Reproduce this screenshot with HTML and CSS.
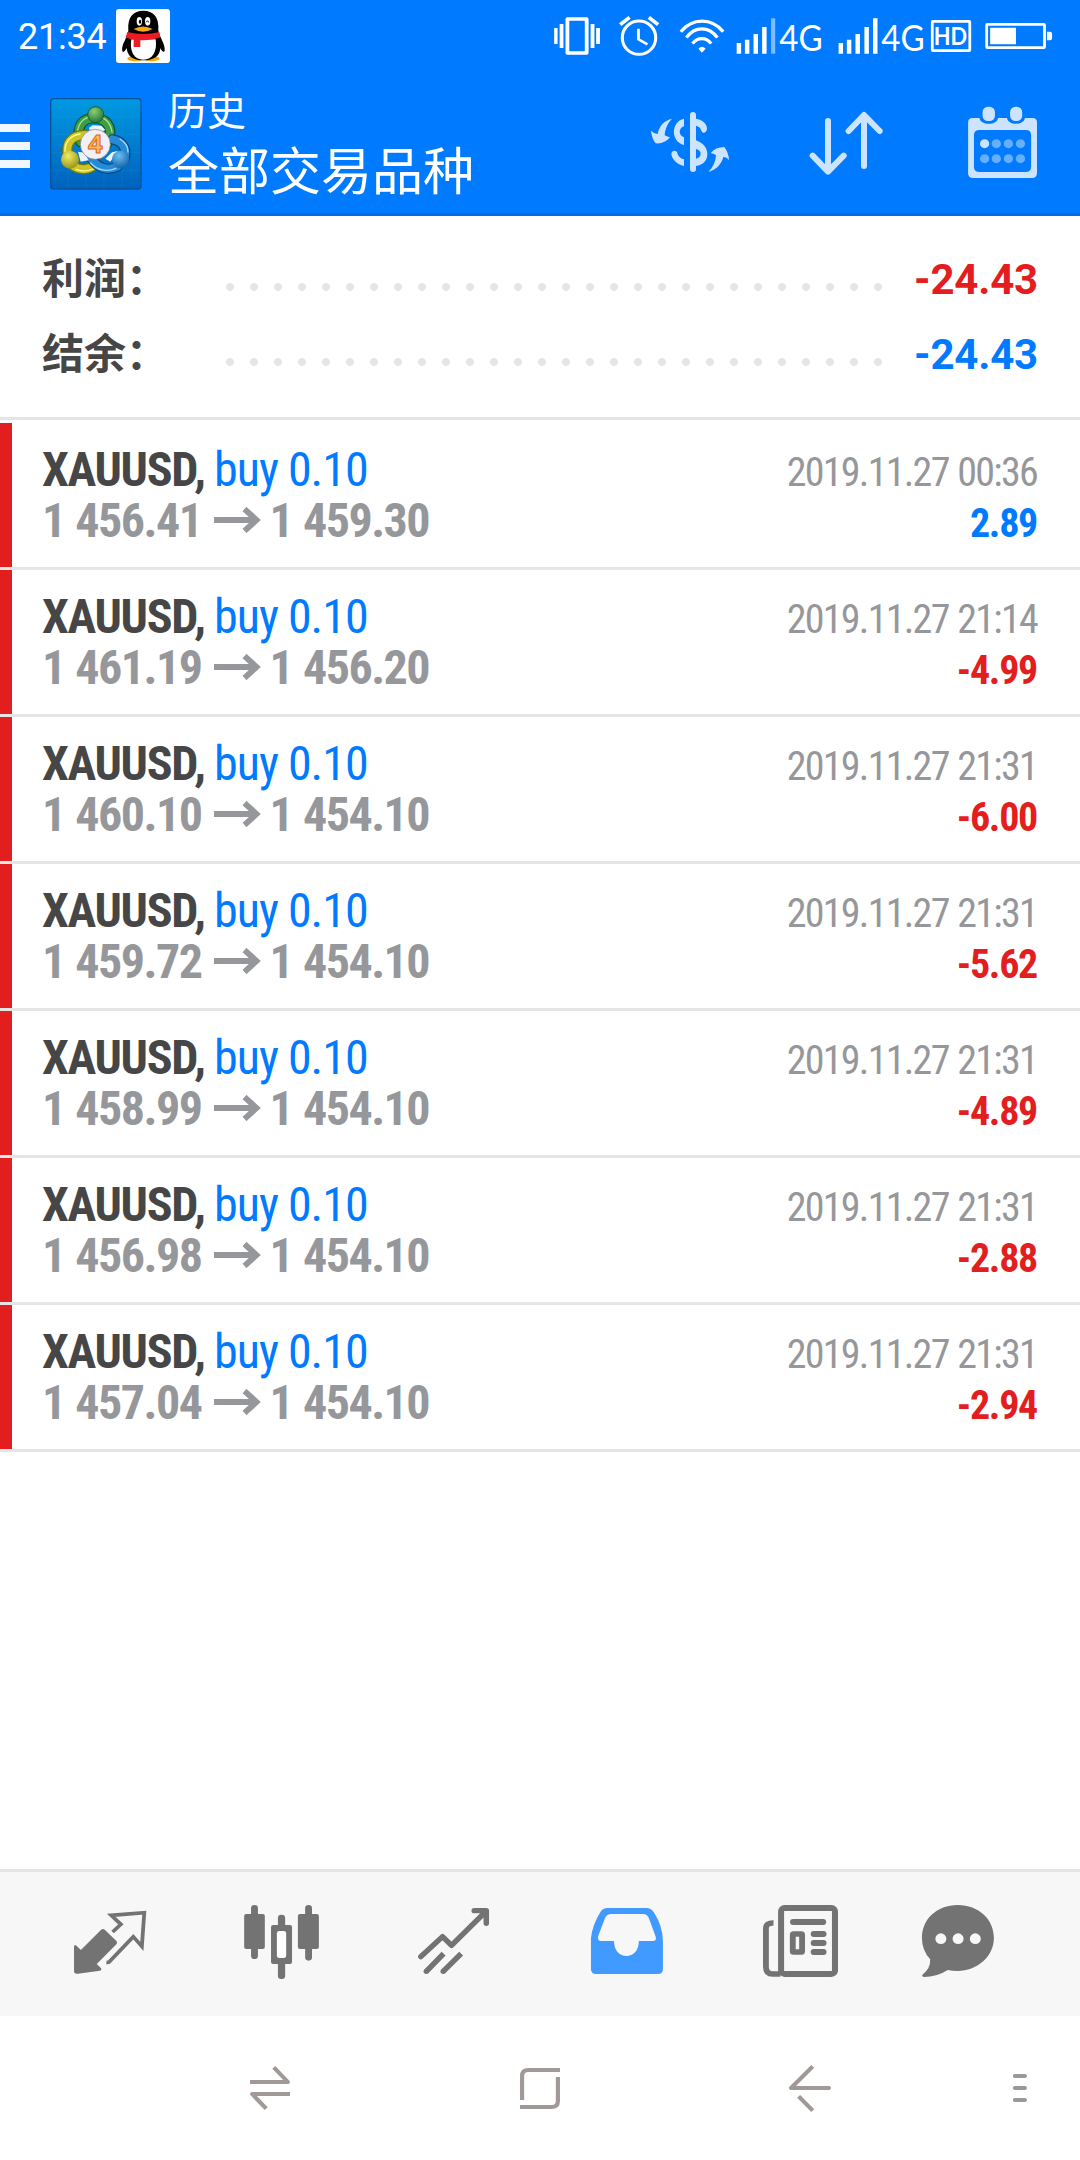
FILE: index.html
```html
<!DOCTYPE html>
<html lang="zh-CN">
<head>
<meta charset="utf-8">
<title>历史</title>
<link rel="stylesheet" href="styles.css">
</head>
<body>
<svg class="defs" width="0" height="0" aria-hidden="true">
  <defs>
    <linearGradient id="tile" x1="0" y1="0" x2="0" y2="1"><stop offset="0" stop-color="#0099e2"/><stop offset="1" stop-color="#0062bd"/></linearGradient>
    <radialGradient id="green" cx=".4" cy=".3" r=".8"><stop offset="0" stop-color="#8ccf7c"/><stop offset="1" stop-color="#176b2c"/></radialGradient>
    <radialGradient id="yellow" cx=".4" cy=".3" r=".8"><stop offset="0" stop-color="#f1ec66"/><stop offset="1" stop-color="#8f8a0c"/></radialGradient>
    <radialGradient id="azure" cx=".4" cy=".3" r=".8"><stop offset="0" stop-color="#6cc0f0"/><stop offset="1" stop-color="#0b5aa6"/></radialGradient>
    <symbol id="arrow" viewBox="0 0 47 26"><path d="M0 13H42M30.500 2L42.500 13L30.500 24" fill="none" stroke="#96979b" stroke-width="5.8"/></symbol>
  </defs>
</svg>
<header class="header">
  <div class="status">
    <span class="time">21:34</span>
    <svg class="qq" viewBox="348 27 162 162">
      <rect x="348" y="27" width="162" height="162" rx="9" fill="#fff"/>
      <ellipse cx="405" cy="176" rx="23" ry="8" fill="#f9a90c"/><ellipse cx="455" cy="176" rx="23" ry="8" fill="#f9a90c"/>
      <path d="M385 92C382 50 400 32 430 32S478 50 475 92L480 108C487 122 496 140 494 152C492 160 484 152 481 144C480 168 462 181 430 181S382 168 380 144C376 152 369 160 367 153C364 140 374 122 381 108Z" fill="#000"/>
      <path d="M394 118H467C472 155 458 179 430 179S388 155 394 118Z" fill="#fff"/>
      <path d="M382 96Q430 108 478 96L481 112Q455 122 421 121V141H401V119Q388 117 377 112Z" fill="#ec1c24"/>
      <ellipse cx="418" cy="64" rx="8" ry="13" fill="#fff"/><ellipse cx="443" cy="64" rx="8" ry="13" fill="#fff"/>
      <ellipse cx="420" cy="65" rx="3.5" ry="6" fill="#000"/><path d="M438 67Q442 58 447 67" fill="none" stroke="#000" stroke-width="3"/>
      <path d="M401 87Q429 72 458 87Q429 103 401 87Z" fill="#f9a90c"/>
    </svg>
    <div class="tray">
      <svg class="vibrate" viewBox="29 36 156.8 150" preserveAspectRatio="none" fill="#fff"><path d="M41 84h10v48H41zM57 72h11v72H57zM147 72h11v72h-11zM163 84h11v48h-11z"/><rect x="79.500" y="57" width="56" height="102" fill="none" stroke="#fff" stroke-width="11" stroke-linejoin="round"/></svg>
      <svg class="alarm" viewBox="223.6 36 127.8 150" preserveAspectRatio="none" fill="none" stroke="#fff" stroke-width="9"><ellipse cx="287.500" cy="113" rx="48.500" ry="50"/><path d="M286 86V118L312 133" stroke-width="8"/><path d="M233 74L260 52M316 52L343 74" stroke-width="11"/></svg>
      <svg class="wifi" viewBox="397.8 36 145.200 150" preserveAspectRatio="none" fill="none" stroke="#fff" stroke-width="9.500"><path d="M409 95C443 53 498 53 532 95M425 113C450 78 490 78 515 113M443 131C457 111 483 111 497 131"/><path d="M460 146Q470 134 481 146L470 158Z" fill="#fff" stroke="none"/></svg>
      <svg class="signal" viewBox="557.5 36 273 150" preserveAspectRatio="none" fill="#fff"><path d="M571 129h13v32h-13zM595 119h13v42h-13zM620 102h13v59h-13zM645 81h13v80h-13z"/><path d="M671 55h12v106h-12z" opacity=".5"/><text x="695" y="154" font-size="112" textLength="126" lengthAdjust="spacingAndGlyphs">4G</text></svg>
      <svg class="signal" viewBox="853.7 36 273 150" preserveAspectRatio="none" fill="#fff"><path d="M867 129h13v32h-13zM891 119h13v42h-13zM916 102h13v59h-13zM942 81h13v80h-13zM967 55h13v106h-13z"/><text x="991" y="154" font-size="112" textLength="126" lengthAdjust="spacingAndGlyphs">4G</text></svg>
      <svg class="hd" viewBox="1126.6 36 133.6 150" preserveAspectRatio="none" fill="#fff"><rect x="1139" y="64" width="109" height="88" rx="2" fill="none" stroke="#fff" stroke-width="8"/><text x="1143" y="135" font-size="74" font-weight="700" textLength="97" lengthAdjust="spacingAndGlyphs">HD</text></svg>
      <svg class="battery" viewBox="1283.4 36 209.1 150" preserveAspectRatio="none" fill="#fff"><rect x="1297" y="73" width="168" height="70" rx="2" fill="none" stroke="#fff" stroke-width="8"/><path d="M1307 83h75v50h-75zM1472 95h9q6 0 6 6v14q0 6-6 6h-9z"/></svg>
    </div>
  </div>
  <div class="toolbar">
    <div class="menu"><i></i><i></i><i></i></div>
    <svg class="logo" viewBox="30 26 276 276">
      <rect x="32" y="28" width="271" height="271" rx="10" fill="url(#tile)" stroke="#08529c" stroke-width="4"/>
      <path d="M84 30V298M138 30V298M192 30V298M246 30V298M34 82H302M34 136H302M34 190H302M34 244H302" stroke="#4db8ff" opacity=".14" stroke-width="2"/>
      <g fill="none" stroke-linecap="round">
        <path d="M122 158C106 108 128 86 166 86C210 90 222 128 198 168" stroke="#0d5522" stroke-width="32"/><path d="M122 158C106 108 128 86 166 86C210 90 222 128 198 168" stroke="#3f9d43" stroke-width="25"/><path d="M112 130C115 96 138 80 166 80C195 83 212 100 216 128" stroke="#a8dda0" stroke-width="4"/>
        <path d="M136 137C90 138 76 162 84 204M100 230C128 248 154 238 168 222" stroke="#767309" stroke-width="31"/><path d="M136 137C90 138 76 162 84 204M100 230C128 248 154 238 168 222" stroke="#cbc528" stroke-width="24"/><path d="M75 186C74 158 92 138 120 134M108 240Q134 250 158 239" stroke="#fff997" stroke-width="4"/>
        <path d="M218 150C250 156 262 180 253 212M232 232C202 246 172 236 154 207" stroke="#0a4684" stroke-width="31"/><path d="M218 150C250 156 262 180 253 212M232 232C202 246 172 236 154 207" stroke="#268bd4" stroke-width="24"/><path d="M240 149C257 160 265 176 264 188M152 221C172 244 202 248 228 237" stroke="#9bdcff" stroke-width="4"/>
      </g>
      <path d="M146 116L158 108L184 109L196 122L180 128H154ZM114 187L133 190L146 213L122 217ZM216 189L233 185L211 217L196 208Z" fill="#e9f5f6"/>
      <circle cx="167" cy="76" r="24" fill="url(#green)" stroke="#12622b" stroke-width="3"/><circle cx="90" cy="211" r="27" fill="url(#yellow)"/><circle cx="242" cy="210" r="26" fill="url(#azure)"/>
      <circle cx="166" cy="165" r="45" fill="#f1f1f5" stroke="#857775" stroke-width="2"/>
      <text x="144" y="191" font-size="75" font-weight="700" fill="#f9bd55" stroke="#dd6420" stroke-width="3" textLength="44" lengthAdjust="spacingAndGlyphs">4</text>
    </svg>
    <div class="titles"><div class="title">历史</div><div class="subtitle">全部交易品种</div></div>
    <div class="actions">
      <svg class="action" viewBox="45 45 270 240" fill="#cce4ff">
        <rect x="180" y="66" width="18" height="180" rx="9"/>
        <path d="M198 86C216 88 232 101 231 117C229 130 216 133 213 119Q210 110 198 107ZM162 86V109C145 114 145 136 162 142V165C122 155 122 95 162 86ZM198 151C221 160 232 174 232 192C232 211 220 225 198 228V206C216 204 217 180 198 177ZM142 189C144 199 151 205 162 208V228C141 223 127 210 124 193C124 180 139 179 142 189Z"/>
        <path d="M126 86C104 91 88 106 83 132Q70 130 63 122Q65 145 77 160Q103 163 120 142Q113 141 104 136C105 117 113 99 126 86ZM235 246C258 240 275 222 280 201Q290 201 297 211Q296 188 283 171Q256 171 242 190Q251 190 258 196C257 215 249 232 235 246Z"/>
      </svg>
      <svg class="action sort" viewBox="510 45 270 240" fill="none" stroke="#cce4ff" stroke-width="18" stroke-linecap="round" stroke-linejoin="round"><path d="M594 93V242M548 197L594 245L641 197M702 228V78M656 123L702 75L749 123"/></svg>
      <svg class="action" viewBox="1219.5 315 261.3 240" preserveAspectRatio="none" fill="#cce4ff">
        <path fill-rule="evenodd" d="M1256 354H1276C1278 377 1328 377 1330 354H1356C1358 377 1406 377 1408 354H1431Q1443 354 1443 368V520Q1443 534 1429 534H1257Q1243 534 1243 520V368Q1243 354 1256 354ZM1276 390Q1260 390 1260 406V500Q1260 516 1276 516H1410Q1426 516 1426 500V406Q1426 390 1410 390Z"/>
        <rect x="1285" y="320" width="36" height="43" rx="16"/><rect x="1365" y="320" width="35" height="43" rx="16"/>
        <circle cx="1291" cy="431" r="13.500"/><g opacity=".5"><circle cx="1325" cy="431" r="13.500"/><circle cx="1360" cy="431" r="13.500"/><circle cx="1395" cy="431" r="13.500"/><circle cx="1291" cy="476" r="13.500"/><circle cx="1325" cy="476" r="13.500"/><circle cx="1360" cy="476" r="13.500"/><circle cx="1395" cy="476" r="13.500"/></g>
      </svg>
    </div>
  </div>
</header>
<main class="content">
  <section class="summary">
    <div class="total"><span class="label">利润：</span><span class="dots"></span><span class="sum loss">-24.43</span></div>
    <div class="total"><span class="label">结余：</span><span class="dots"></span><span class="sum gain">-24.43</span></div>
  </section>
  <section class="deals">
    <article class="deal"><div class="line"><span class="symbol">XAUUSD,</span><span class="side">buy 0.10</span><span class="date">2019.11.27 00:36</span></div><div class="line"><span class="price">1 456.41</span><svg class="arrow"><use href="#arrow"/></svg><span class="price">1 459.30</span><span class="amount gain">2.89</span></div></article>
    <article class="deal"><div class="line"><span class="symbol">XAUUSD,</span><span class="side">buy 0.10</span><span class="date">2019.11.27 21:14</span></div><div class="line"><span class="price">1 461.19</span><svg class="arrow"><use href="#arrow"/></svg><span class="price">1 456.20</span><span class="amount loss">-4.99</span></div></article>
    <article class="deal"><div class="line"><span class="symbol">XAUUSD,</span><span class="side">buy 0.10</span><span class="date">2019.11.27 21:31</span></div><div class="line"><span class="price">1 460.10</span><svg class="arrow"><use href="#arrow"/></svg><span class="price">1 454.10</span><span class="amount loss">-6.00</span></div></article>
    <article class="deal"><div class="line"><span class="symbol">XAUUSD,</span><span class="side">buy 0.10</span><span class="date">2019.11.27 21:31</span></div><div class="line"><span class="price">1 459.72</span><svg class="arrow"><use href="#arrow"/></svg><span class="price">1 454.10</span><span class="amount loss">-5.62</span></div></article>
    <article class="deal"><div class="line"><span class="symbol">XAUUSD,</span><span class="side">buy 0.10</span><span class="date">2019.11.27 21:31</span></div><div class="line"><span class="price">1 458.99</span><svg class="arrow"><use href="#arrow"/></svg><span class="price">1 454.10</span><span class="amount loss">-4.89</span></div></article>
    <article class="deal"><div class="line"><span class="symbol">XAUUSD,</span><span class="side">buy 0.10</span><span class="date">2019.11.27 21:31</span></div><div class="line"><span class="price">1 456.98</span><svg class="arrow"><use href="#arrow"/></svg><span class="price">1 454.10</span><span class="amount loss">-2.88</span></div></article>
    <article class="deal"><div class="line"><span class="symbol">XAUUSD,</span><span class="side">buy 0.10</span><span class="date">2019.11.27 21:31</span></div><div class="line"><span class="price">1 457.04</span><svg class="arrow"><use href="#arrow"/></svg><span class="price">1 454.10</span><span class="amount loss">-2.94</span></div></article>
  </section>
</main>
<nav class="tabs">
  <svg class="tab quotes" viewBox="203.3 156 232.3 240" preserveAspectRatio="none"><path d="M215 290Q215 282 222 287L235 300L293 240Q299 234 305 240L338 273Q342 278 338 283L281 342L293 354Q297 360 290 362L226 371Q215 373 215 363Z" fill="#737373"/><path d="M327 246L351 223L323 196L419 188L412 289L387 260L319 334Q315 338 309 337" fill="none" stroke="#737373" stroke-width="11"/></svg>
  <svg class="tab charts" viewBox="699.8 156 232.3 240" preserveAspectRatio="none" fill="#737373"><rect x="709" y="192" width="60" height="105" rx="6"/><rect x="729" y="165" width="20" height="162" rx="10"/><rect x="865" y="192" width="61" height="105" rx="6"/><rect x="886" y="165" width="20" height="167" rx="10"/><rect x="807" y="194" width="21" height="60" rx="10"/><rect x="807" y="320" width="21" height="67" rx="9"/><rect x="787" y="225" width="61" height="117" rx="6"/><rect x="804" y="243" width="27" height="81" rx="7" fill="#fff"/></svg>
  <svg class="tab trade" viewBox="1199.2 156 232.3 240" preserveAspectRatio="none" fill="none" stroke="#737373" stroke-width="16" stroke-linejoin="round"><path d="M1222 320L1285 260L1311 286L1408 187M1377 182H1412V220" stroke-linecap="round"/><path d="M1238 364L1288 311M1287 364L1339 311"/><g fill="#737373" stroke="none"><circle cx="1238" cy="364" r="8"/><circle cx="1287" cy="364" r="8"/></g></svg>
  <svg class="tab history" viewBox="136.5 156 232.3 240" preserveAspectRatio="none"><path fill="#409aff" fill-rule="evenodd" d="M196 174H309Q322 174 330 186Q357 228 357 275V357Q357 372 342 372H163Q148 372 148 357V265Q152 224 176 185Q183 174 196 174ZM207 192Q194 192 189 204L169 258Q166 273 178 273H215C214 333 288 333 287 273H328Q339 273 336 260L316 204Q312 192 298 192Z"/></svg>
  <svg class="tab news" viewBox="641.7 156 232.3 240" preserveAspectRatio="none" fill="none" stroke="#737373"><rect x="700" y="174" width="156.500" height="198" rx="10" stroke-width="17.500"/><path d="M678 219Q656 218 656 236V350Q656 372 676 372H698" stroke-width="17"/><path d="M735 216H822M795 252H823M795 279H823M795 306H823" stroke-width="18" stroke-linecap="round"/><rect x="734" y="252" width="27" height="54" rx="2" stroke-width="17"/></svg>
  <svg class="tab chat" viewBox="1097.6 156 232.3 240" preserveAspectRatio="none"><path d="M1213 165C1274 165 1318 208 1318 264S1268 363 1213 363Q1197 363 1184 360Q1152 381 1115 381Q1106 379 1112 373Q1134 355 1133 328Q1109 301 1109 264C1109 208 1152 165 1213 165Z" fill="#737373"/><g fill="#f7f7f7"><circle cx="1164" cy="266" r="16"/><circle cx="1214" cy="266" r="16"/><circle cx="1264" cy="266" r="16"/></g></svg>
</nav>
<footer class="sysnav">
  <svg class="key recent" viewBox="696.9 624 174.2 180" preserveAspectRatio="none"><path d="M726 696H836L795 652M842 732H732L773 776"/></svg>
  <svg class="key home" viewBox="1480.9 624 174.2 180" preserveAspectRatio="none"><path d="M1516 750V678Q1516 660 1534 660H1626M1620 681V753Q1620 771 1602 771H1510"/></svg>
  <svg class="key back" viewBox="696.9 624 174.2 180" preserveAspectRatio="none"><path d="M792 649L729 714H839M751 739L792 782"/><circle cx="839" cy="714" r="6" class="cap"/></svg>
  <svg class="key more" viewBox="1306.7 624 174.2 180" preserveAspectRatio="none"><path d="M1379 678H1408M1379 714H1408M1379 750H1408"/></svg>
</footer>
</body>
</html>
```
FILE: styles.css
```css
* { box-sizing: border-box; }
body { margin: 0; width: 1080px; height: 2160px; display: flex; flex-direction: column; background: #fff; font-family: Roboto, "Noto Sans CJK SC", sans-serif; overflow: hidden; }
svg { display: block; flex: none; }
.defs { position: absolute; }

.header { height: 216px; flex: none; background: #007aff; border-bottom: 3px solid #006ee6; color: #fff; }
.status { height: 72px; display: flex; align-items: flex-start; padding-left: 18px; }
.time { width: 98px; padding-top: 16px; font-size: 36px; line-height: 42px; letter-spacing: -0.2px; }
.qq { width: 54px; height: 54px; margin-top: 9px; }
.tray { display: flex; margin: 12px 26px 0 auto; font-family: Lato, sans-serif; }
.tray svg { height: 50px; overflow: visible; }
.vibrate { width: 54px; margin-right: 13px; }
.alarm { width: 44px; margin-right: 16px; }
.wifi { width: 50px; margin-right: 5px; }
.signal { width: 94px; margin-right: 8px; }
.signal + .signal { margin-right: 0; }
.hd { width: 46px; margin-right: 8px; }
.battery { width: 72px; }

.toolbar { height: 141px; display: flex; align-items: flex-start; }
.menu { width: 30px; margin: 52px 20px 0 0; display: grid; gap: 10px; }
.menu i { height: 8px; background: #f0f7ff; }
.logo { width: 92px; height: 92px; margin-top: 26px; font-family: "Open Sans", sans-serif; }
.titles { margin: 10px 0 0 26px; font-family: "Noto Sans CJK SC", sans-serif; white-space: nowrap; }
.title { font-size: 39px; line-height: 52px; }
.subtitle { font-size: 51px; line-height: 68px; }
.actions { display: flex; gap: 65px; margin: 33px 30px 0 auto; }
.action { width: 90px; height: 80px; }
.sort { margin-right: 5px; }

.content { flex: 1; }
.summary { height: 204px; padding: 24px 42px 0; border-bottom: 3px solid #e5e5e5; }
.total { height: 75px; display: flex; align-items: flex-start; font-size: 42px; font-weight: 700; }
.label { width: 176px; color: #464646; font-family: "Noto Sans CJK SC", sans-serif; line-height: 71px; }
.dots { width: 672px; height: 24px; margin-top: 35px; background: radial-gradient(circle, #e5e5e5 3.600px, transparent 4.200px) 0 0 / 24px 24px repeat-x; }
.sum { margin-left: auto; line-height: 79px; letter-spacing: -0.2px; }
.loss { color: #e21e1e; }
.gain { color: #007aff; }

.deals { padding-top: 3px; }
.deal { height: 147px; padding: 21px 42px 0; border-bottom: 3px solid #e5e5e5; background: linear-gradient(#e21e1e, #e21e1e) 0 0 / 12px 144px no-repeat; font-family: "Roboto Condensed", Roboto, sans-serif; font-stretch: 75%; }
.line { height: 51px; display: flex; align-items: baseline; line-height: 52px; font-size: 48px; white-space: nowrap; }
.symbol { width: 172px; color: #464646; font-weight: 700; letter-spacing: -1.300px; }
.side { color: #007aff; letter-spacing: -1px; }
.price { color: #96979b; font-weight: 700; letter-spacing: -1.500px; word-spacing: 1px; }
.arrow { width: 47px; height: 26px; margin: 0 9px 6px 12px; transform: translateY(-4px); }
.date { margin-left: auto; margin-right: 1px; color: #96979b; font-size: 40px; letter-spacing: -1.700px; word-spacing: 1px; }
.amount { margin-left: auto; margin-right: 1px; font-size: 40px; font-weight: 700; letter-spacing: -1.300px; }

.tabs { height: 147px; flex: none; display: flex; padding: 30px 0 0 70px; border-top: 3px solid #e5e5e5; background: #f7f7f7; }
.tab { width: 80px; height: 80px; }
.charts { margin-left: 91px; }
.trade { margin-left: 92px; }
.history, .news { margin-left: 94px; }
.chat { margin-left: 77px; }

.sysnav { height: 144px; flex: none; display: flex; align-items: center; padding-left: 240px; background: #fff; }
.key { width: 60px; height: 60px; margin-right: 210px; fill: none; stroke: #a19997; stroke-width: 12; stroke-linejoin: round; }
.key .cap { fill: #a19997; stroke: none; }
.back { margin-right: 150px; }
.more { margin-right: 0; stroke: #999; stroke-linecap: round; }
```
